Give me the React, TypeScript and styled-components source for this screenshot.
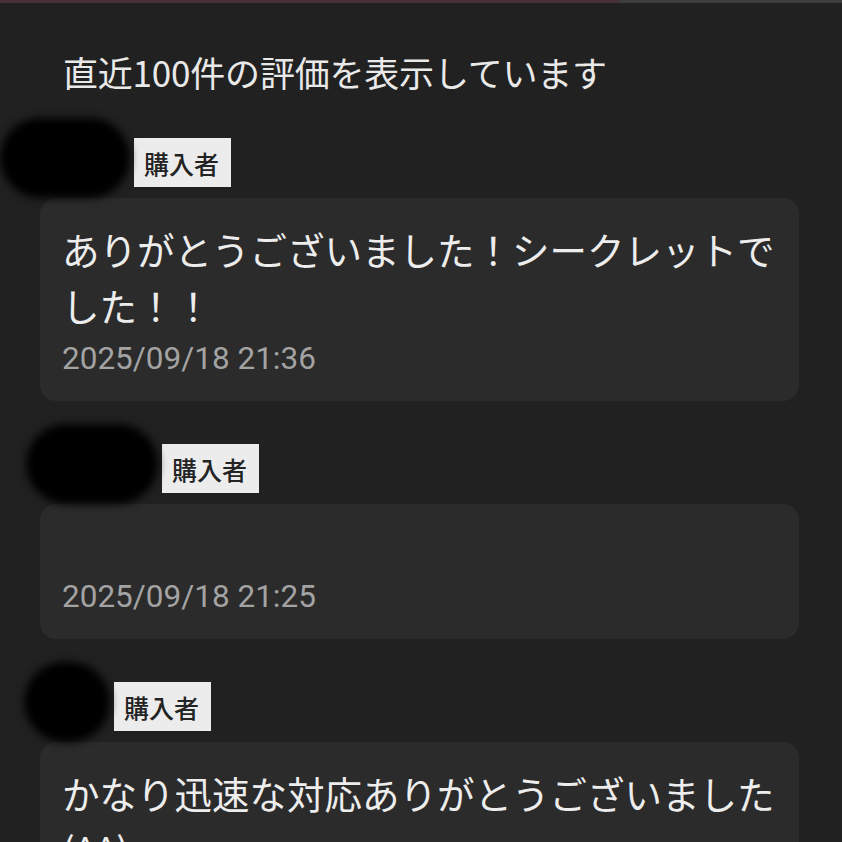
import styled, { createGlobalStyle } from "styled-components";

const GlobalStyle = createGlobalStyle`
  html, body {
    margin: 0;
    padding: 0;
    background: #212121;
  }
  body {
    font-family: "Noto Sans CJK JP", "Noto Sans", sans-serif;
    color: #ececec;
    overflow: hidden;
  }
`;

interface ReviewData {
  id: number;
  comment: string;
  postedAt: string;
  maskWidth: number;
  maskOffset: number;
}

const reviews: ReviewData[] = [
  {
    id: 1,
    comment: "ありがとうございました！シークレットでした！！",
    postedAt: "2025/09/18 21:36",
    maskWidth: 130,
    maskOffset: 0
  },
  {
    id: 2,
    comment: "",
    postedAt: "2025/09/18 21:25",
    maskWidth: 132,
    maskOffset: 26
  },
  {
    id: 3,
    comment: "かなり迅速な対応ありがとうございました(^^)",
    postedAt: "2025/09/18 21:02",
    maskWidth: 86,
    maskOffset: 24
  }
];

export default function App() {
  return (
    <Page>
      <GlobalStyle />
      <TopBar>
        <TopBarFill />
      </TopBar>
      <Notice>直近100件の評価を表示しています</Notice>
      <ReviewList>
        {reviews.map((review) => (
          <Review key={review.id}>
            <ReviewHeader>
              <NameMask $width={review.maskWidth} $offset={review.maskOffset} />
              <BuyerBadge>購入者</BuyerBadge>
            </ReviewHeader>
            <ReviewCard>
              <Comment>{review.comment}</Comment>
              <Timestamp>{review.postedAt}</Timestamp>
            </ReviewCard>
          </Review>
        ))}
      </ReviewList>
    </Page>
  );
}

const Page = styled.main`
  width: 842px;
  height: 842px;
  overflow: hidden;
  background: #212121;
`;

const TopBar = styled.div`
  height: 3px;
  background: #3d3d3d;
`;

const TopBarFill = styled.div`
  width: 620px;
  height: 100%;
  background: #46303a;
`;

const Notice = styled.p`
  margin: 44px 0 0;
  padding-left: 63px;
  font-size: 35px;
  line-height: 50px;
  color: #e9e9e9;
  letter-spacing: -0.2px;
`;

const ReviewList = styled.div`
  display: flex;
  flex-direction: column;
  gap: 43px;
  margin-top: 41px;
`;

const Review = styled.section`
  display: flex;
  flex-direction: column;
  gap: 11px;
`;

const ReviewHeader = styled.div`
  display: flex;
  align-items: center;
  gap: 4px;
  height: 49px;
`;

const NameMask = styled.span<{ $width: number; $offset: number }>`
  width: ${({ $width }) => $width}px;
  height: 80px;
  margin-left: ${({ $offset }) => $offset}px;
  margin-top: -10px;
  border-radius: 40px;
  background: #000;
  filter: blur(4px);
  flex-shrink: 0;
`;

const BuyerBadge = styled.span`
  display: inline-flex;
  align-items: center;
  height: 49px;
  padding: 0 12px 0 10px;
  background: #ececec;
  color: #232323;
  font-size: 25px;
  font-weight: 500;
`;

const ReviewCard = styled.div`
  margin: 0 43px 0 40px;
  padding: 23px 22px 22px;
  border-radius: 16px;
  background: #2b2b2b;
`;

const Comment = styled.p`
  margin: 0;
  min-height: 44px;
  font-size: 37.5px;
  line-height: 56px;
  color: #ededed;
  word-break: break-all;
`;

const Timestamp = styled.div`
  margin-top: 6px;
  font-family: Roboto, "Noto Sans", sans-serif;
  font-size: 31.5px;
  line-height: 40px;
  color: #a3a3a3;
`;
